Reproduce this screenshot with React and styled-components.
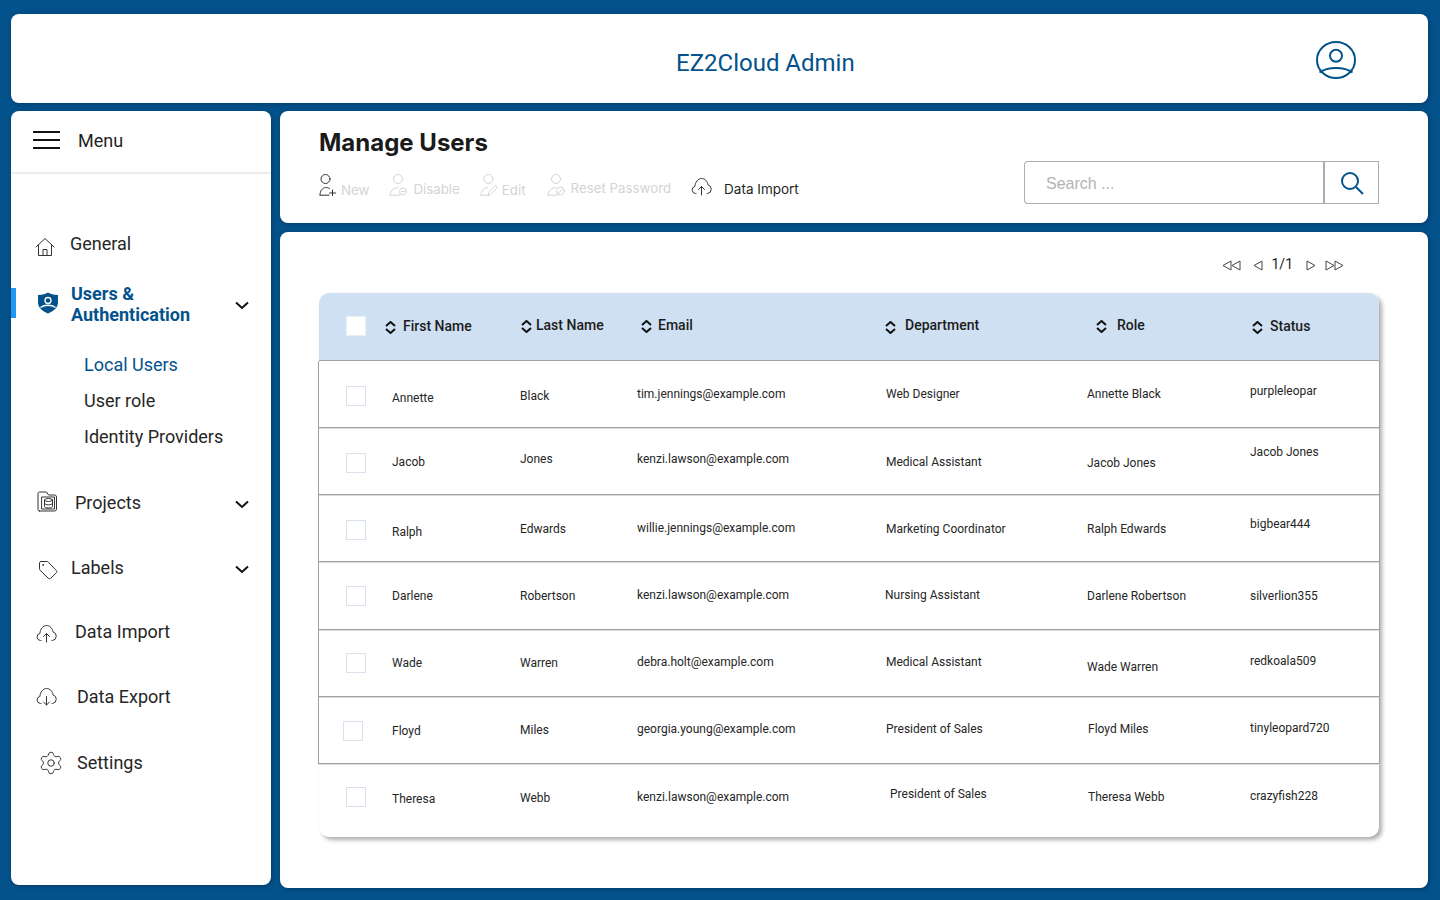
import React from 'react';
import styled, { createGlobalStyle } from 'styled-components';
import { Settings } from 'lucide-react';

const BLUE = '#04528c';
const INK = '#1f1f1f';
const MUTED = '#d4d4d4';

const GlobalStyle = createGlobalStyle`
	* { box-sizing: border-box; }
	html, body { margin: 0; height: 100%; }
	body {
		background: ${BLUE};
		font-family: Roboto, "Liberation Sans", sans-serif;
		color: ${INK};
	}
`;

const Page = styled.div`
	width: 1440px;
	height: 900px;
	overflow: hidden;
	padding: 14px 12px 0 11px;
	display: grid;
	grid-template-columns: 260px 1fr;
	grid-template-rows: 89px 774px;
	column-gap: 9px;
	row-gap: 8px;
	background: ${BLUE};
`;

const Card = styled.section`
	background: #fff;
	border-radius: 8px;
	box-shadow: 1px 1px 5px rgba(0, 30, 60, 0.45);
`;

const Header = styled(Card)`
	grid-column: 1 / 3;
	display: flex;
	align-items: center;
	padding: 0 72px 0 665px;
	justify-content: space-between;
	svg { margin-top: 3px; }
`;

const Brand = styled.h1`
	margin: 8px 0 0;
	font-size: 24px;
	font-weight: 400;
	color: ${BLUE};
`;

const Sidebar = styled(Card)``;

const MenuHead = styled.div`
	height: 63px;
	display: flex;
	align-items: center;
	padding: 0 0 3px 22px;
	gap: 18px;
	border-bottom: 2px solid #ececec;
	font-size: 18px;
`;

const Burger = styled.span`
	width: 27px;
	height: 18px;
	border-top: 2px solid #111;
	border-bottom: 2px solid #111;
	position: relative;
	&::after {
		content: '';
		position: absolute;
		left: 0;
		right: 0;
		top: 6px;
		height: 2px;
		background: #111;
	}
`;

const NavItem = styled.div`
	position: relative;
	display: flex;
	align-items: center;
	height: ${p => p.$h || 36}px;
	margin-top: ${p => p.$mt}px;
	padding: ${p => (p.$h ? 0 : 1)}px 22px 0 ${p => p.$pl || 24}px;
	gap: ${p => p.$gap}px;
	font-size: 18px;
	line-height: 21px;
	color: #262626;
	svg.icon {
		flex: none;
		margin-top: ${p => (p.$iy || 0) * 2}px;
	}
`;

const ActiveItem = styled(NavItem)`
	font-weight: 700;
	color: ${BLUE};
	&::before {
		content: '';
		position: absolute;
		left: 0;
		top: 5px;
		width: 5px;
		height: 30px;
		background: #2196f3;
	}
`;

const NavChevron = styled.svg`
	margin-left: auto;
	margin-top: ${p => (p.$dy || 0) * 2}px;
	flex: none;
`;

const SubItem = styled.div`
	height: 36px;
	line-height: 36px;
	padding-left: 73px;
	font-size: 18px;
	color: ${p => (p.$active ? BLUE : '#262626')};
`;

const SubList = styled.div`
	margin-top: 22px;
`;

const RightColumn = styled.div`
	display: flex;
	flex-direction: column;
	gap: 9px;
	height: 777px;
`;

const ToolCard = styled(Card)`
	height: 112px;
	display: flex;
	justify-content: space-between;
	align-items: flex-end;
	padding: 0 49px 19px 39px;
`;

const Title = styled.h2`
	margin: 0 0 17px;
	font-family: Inter, sans-serif;
	font-size: 24px;
	line-height: 29px;
	font-weight: 700;
	color: #1a1a1a;
`;

const Actions = styled.div`
	display: flex;
	align-items: flex-end;
	margin-bottom: 5px;
`;

const Action = styled.div`
	display: flex;
	align-items: flex-end;
	gap: ${p => p.$gap}px;
	margin-right: ${p => p.$mr}px;
	padding-bottom: ${p => p.$up || 0}px;
	font-family: Inter, sans-serif;
	font-size: ${p => (p.$on ? 13.5 : 13.3)}px;
	line-height: 17px;
	color: ${p => (p.$on ? INK : MUTED)};
	svg { margin-bottom: ${p => 3 - (p.$up || 0)}px; }
`;

const SearchBox = styled.div`
	display: flex;
	height: 43px;
	width: 355px;
`;

const SearchField = styled.div`
	width: 301px;
	border: 1px solid #adadad;
	border-right-width: 2px;
	border-radius: 4px 0 0 4px;
	padding: 2px 0 0 21px;
	display: flex;
	align-items: center;
	font-family: "Liberation Sans", Arial, sans-serif;
	font-size: 16px;
	color: #b3b3b3;
`;

const SearchButton = styled.div`
	flex: 1;
	border: 1px solid #adadad;
	border-left: 0;
	display: flex;
	align-items: center;
	justify-content: center;
`;

const MainCard = styled(Card)`
	flex: 1;
	padding: 24px 49px 0 39px;
`;

const Pager = styled.div`
	height: 18px;
	margin-bottom: 19px;
	padding-right: 35px;
	display: flex;
	justify-content: flex-end;
	align-items: center;
	font-size: 14px;
	color: #222;
`;

const PagerGap = styled.span`
	width: ${p => p.$w}px;
`;

const PageCount = styled.span`
	margin-bottom: 2px;
`;

const Table = styled.div`
	height: 544px;
	border-radius: 10px;
	background: #fff;
	box-shadow: 3px 3px 4px rgba(0, 0, 0, 0.32);
`;

const HeadRow = styled.div`
	height: 68px;
	padding-bottom: 3px;
	background: #cfe0f2;
	border-radius: 10px 10px 0 0;
	border-bottom: 1px solid #a0a0a0;
	display: grid;
	grid-template-columns: 66px 136px 120px 244px 211px 156px 1fr;
	align-items: center;
	font-size: 14px;
	font-weight: 500;
	color: #1c1c1c;
`;

const HeadCell = styled.div`
	display: flex;
	align-items: center;
	gap: ${p => p.$gap}px;
	margin-top: ${p => (p.$dy || 0) * 2}px;
	svg { margin-top: ${p => (p.$iy || 1) * 2}px; }
`;

const Row = styled.div`
	height: ${p => p.$h}px;
	margin: 0 -1px;
	padding-bottom: ${p => (p.$last ? 8 : 0)}px;
	padding-left: ${p => (p.$last ? 1 : 0)}px;
	border: ${p => (p.$last ? '0' : '1px solid #a0a0a0')};
	border-top: 0;
	box-shadow: ${p => (p.$last ? 'none' : '0 1px 0 #dcdcdc')};
	display: grid;
	grid-template-columns: 73px 128px 117px 249px 201px 163px 1fr;
	align-items: center;
	font-size: 12px;
	color: #262626;
`;

const Cell = styled.div`
	margin-top: ${p => (p.$dy || 0) * 2}px;
	margin-left: ${p => p.$dx || 0}px;
`;

const Check = styled.span`
	display: block;
	width: 20px;
	height: 20px;
	background: #fff;
	border: 1px solid ${p => (p.$head ? '#e6eef7' : '#d9e2ec')};
	margin-left: ${p => 27 + (p.$dx || 0)}px;
	margin-top: ${p => (p.$dy || 0) * 2}px;
`;

/* thin line icons */
const Line = ({ size = 20, w, h, color = '#333', sw = 1, children, ...rest }) => (
	<svg
		className="icon"
		width={w || size}
		height={h || size}
		viewBox={`0 0 ${w || size} ${h || size}`}
		fill="none"
		stroke={color}
		strokeWidth={sw}
		strokeLinecap="round"
		strokeLinejoin="round"
		{...rest}
	>
		{children}
	</svg>
);

const CloudUp = ({ color, w = 21, h = 19 }) => (
	<Line w={w} h={h} color={color}>
		<path d="M5 16.500H4.500a3.600 3.600 0 0 1-.6-7.100C4.200 5 7.300 1.500 10.500 1.500c3.200 0 6 2.600 6.500 6.400a4.400 4.400 0 0 1-.5 8.600H16" />
		<path d="M10.500 18V9.500M7.500 12.500l3-3 3 3" />
	</Line>
);

const CloudDown = () => (
	<Line w={21} h={19}>
		<path d="M5 16.500H4.500a3.600 3.600 0 0 1-.6-7.100C4.200 5 7.300 1.500 10.500 1.500c3.200 0 6 2.600 6.500 6.400a4.400 4.400 0 0 1-.5 8.600H16" />
		<path d="M10.500 9.500V18M7.500 15l3 3 3-3" />
	</Line>
);

const HomeIcon = () => (
	<Line w={20} h={20}>
		<path d="M1 10 10 1.500 19 10M3.500 8v10.500h13V8" />
		<path d="M8 18.500v-6h4v6" />
	</Line>
);

const ShieldIcon = () => (
	<svg className="icon" width="22" height="22" viewBox="0 0 22 22">
		<path fill={BLUE} d="M11 .5c2.500 1.600 5.300 2.400 10 2.600v7.400c0 5-4.200 8.700-10 11C5.200 19.200 1 15.500 1 10.500V3.100C5.700 2.900 8.500 2.100 11 .5z" />
		<circle cx="11" cy="8.500" r="3" fill="none" stroke="#fff" strokeWidth="1.300" />
		<path d="M3.500 15.500c4-3 11-3 15 0" fill="none" stroke="#fff" strokeWidth="1.300" />
	</svg>
);

const ProjectsIcon = () => (
	<Line w={21} h={21}>
		<path d="M2.500 20H17.500a2 2 0 0 0 2-2V6a2 2 0 0 0-2-2h-6l-2-3H2.500a1.500 1.500 0 0 0-1.500 1.500V18.500A1.500 1.500 0 0 0 2.500 20z" />
		<path d="M5 6h12.500v12H5z" />
		<ellipse cx="11.500" cy="9" rx="4" ry="1.500" />
		<path d="M7.500 9v6.500c0 .8 1.800 1.500 4 1.500s4-.7 4-1.500V9M7.500 12.300c0 .8 1.800 1.500 4 1.500s4-.7 4-1.500" />
	</Line>
);

const TagIcon = () => (
	<Line w={20} h={20}>
		<path d="M3 1.500h6c.5 0 1 .2 1.300.6l8.100 8.500c.6.600.6 1.500 0 2.100l-5.800 5.700c-.6.600-1.500.6-2.100 0L2 10.200c-.3-.3-.5-.8-.5-1.300V3c0-.8.700-1.500 1.500-1.500z" />
		<circle cx="5" cy="5" r=".4" />
	</Line>
);

const Chevron = ({ dy }) => (
	<NavChevron $dy={dy} width="14" height="9" viewBox="0 0 14 9" fill="none" stroke="#111" strokeWidth="2">
		<path d="M1 1.500 7 7l6-5.500" />
	</NavChevron>
);

const ProfileIcon = () => (
	<svg width="40" height="38" viewBox="0 0 40 38" fill="none" stroke={BLUE} strokeWidth="2">
		<ellipse cx="20" cy="19" rx="19" ry="18" />
		<circle cx="20" cy="14.700" r="6" />
		<path d="M3.500 31.500c8-6 25-6 33 0" />
	</svg>
);

const SearchIcon = () => (
	<svg width="24" height="24" viewBox="0 0 24 24" fill="none" stroke={BLUE} strokeWidth="2">
		<circle cx="10" cy="10" r="8" />
		<path d="m16 16 7 7" />
	</svg>
);

const NewUserIcon = () => (
	<Line w={18} h={22}>
		<circle cx="6.500" cy="5" r="4.500" />
		<path d="M1 21c0-4.500 2.500-7 5.500-7.500 1.500-.1 3 .3 4 1" />
		<path d="M1 21.200h9M13.500 16v6M10.500 19h6" />
	</Line>
);

const DisableUserIcon = () => (
	<Line w={18} h={22} color={MUTED}>
		<circle cx="9" cy="5" r="4.500" />
		<path d="M1 21c.5-4 3-7 8-7.500M1 21.200h10" />
		<circle cx="14" cy="17.500" r="3.500" />
		<path d="M12.500 17.500h3" />
	</Line>
);

const EditUserIcon = () => (
	<Line w={18} h={22} color={MUTED}>
		<circle cx="8.500" cy="5" r="4.500" />
		<path d="M1 21c.3-4.500 3-7 6.500-7.500M1 21.200h8" />
		<path d="M8 21.200l1-3.500 6.500-6.500 2 2-6.500 6.500z" />
	</Line>
);

const ResetUserIcon = () => (
	<Line w={18} h={22} color={MUTED}>
		<circle cx="9" cy="5" r="4.500" />
		<path d="M1 21c.5-4 3-7 8-7.500M1 21.200h9" />
		<circle cx="13.500" cy="17" r="4" />
		<path d="M10.500 20l5.500-5.500" />
	</Line>
);

const SortIcon = () => (
	<svg width="11" height="13" viewBox="0 0 11 13" fill="none" stroke="#111" strokeWidth="2" strokeLinejoin="round">
		<path d="M1 5 5.500 1 10 5M1 8l4.500 4L10 8" />
	</svg>
);

const PagerTri = ({ dir, double }) => {
	const tri = x => (dir === 'l' ? `M${x + 8} 1 ${x} 5.500l${8} 4.500z` : `M${x} 1l8 4.500-8 4.500z`);
	return (
		<svg width={double ? 19 : 10} height="11" viewBox={`0 0 ${double ? 19 : 10} 11`} fill="none" stroke="#444" strokeWidth="1">
			<path d={tri(1)} />
			{double && <path d={tri(10)} />}
		</svg>
	);
};

const heads = [
	{ label: 'First Name', gap: 7, dy: 1, iy: 1 },
	{ label: 'Last Name', gap: 4, dy: 0, iy: 1 },
	{ label: 'Email', gap: 6, dy: 0, iy: 1 },
	{ label: 'Department', gap: 9, dy: 0, iy: 2 },
	{ label: 'Role', gap: 10, dy: 0, iy: 1 },
	{ label: 'Status', gap: 7, dy: 1, iy: 1 }
];

const rows = [
	{ h: 67, check: 2, cells: ['Annette', 'Black', 'tim.jennings@example.com', 'Web Designer', 'Annette Black', 'purpleleopar'], dy: [4, 2, 0, 0, 0, -3] },
	{ h: 67, check: 2, cells: ['Jacob', 'Jones', 'kenzi.lawson@example.com', 'Medical Assistant', 'Jacob Jones', 'Jacob Jones'], dy: [1, -2, -2, 1, 2, -9] },
	{ h: 67, check: 2, cells: ['Ralph', 'Edwards', 'willie.jennings@example.com', 'Marketing Coordinator', 'Ralph Edwards', 'bigbear444'], dy: [4, 1, 0, 1, 1, -4] },
	{ h: 68, check: 0, cells: ['Darlene', 'Robertson', 'kenzi.lawson@example.com', 'Nursing Assistant', 'Darlene Robertson', 'silverlion355'], dy: [0, 0, -1, -1, 0, 0], dx: { 3: -1 } },
	{ h: 67, check: 0, cells: ['Wade', 'Warren', 'debra.holt@example.com', 'Medical Assistant', 'Wade Warren', 'redkoala509'], dy: [0, 0, -1, -1, 4, -2] },
	{ h: 67, check: 1, checkDx: -3, cells: ['Floyd', 'Miles', 'georgia.young@example.com', 'President of Sales', 'Floyd Miles', 'tinyleopard720'], dy: [1, 0, -1, -1, -1, -2], dx: { 4: 1 } },
	{ h: 73, last: true, check: 0, cells: ['Theresa', 'Webb', 'kenzi.lawson@example.com', 'President of Sales', 'Theresa Webb', 'crazyfish228'], dy: [2, 1, 0, -3, 0, -1], dx: { 3: 4, 4: 1 } }
];

const App = () => (
	<Page>
		<GlobalStyle />
		<Header>
			<Brand>EZ2Cloud Admin</Brand>
			<ProfileIcon />
		</Header>

		<Sidebar>
			<MenuHead>
				<Burger />
				<span>Menu</span>
			</MenuHead>
			<NavItem $mt={51} $gap={15} $iy={3}>
				<HomeIcon />
				General
			</NavItem>
			<ActiveItem $mt={22} $h={42} $gap={12} $pl={26} $iy={-1}>
				<ShieldIcon />
				<span>Users &amp;<br />Authentication</span>
				<Chevron dy={1} />
			</ActiveItem>
			<SubList>
				<SubItem $active>Local Users</SubItem>
				<SubItem>User role</SubItem>
				<SubItem>Identity Providers</SubItem>
			</SubList>
			<NavItem $mt={29} $gap={17} $pl={26} $iy={-1}>
				<ProjectsIcon />
				Projects
				<Chevron dy={2} />
			</NavItem>
			<NavItem $mt={29} $gap={13} $pl={27} $iy={2.5}>
				<TagIcon />
				Labels
				<Chevron dy={2} />
			</NavItem>
			<NavItem $mt={28} $gap={18} $pl={25} $iy={2}>
				<CloudUp />
				Data Import
			</NavItem>
			<NavItem $mt={29} $gap={20} $pl={25}>
				<CloudDown />
				Data Export
			</NavItem>
			<NavItem $mt={30} $gap={13} $pl={27}>
				<Settings className="icon" size={26} strokeWidth={0.9} color="#333" />
				Settings
			</NavItem>
		</Sidebar>

		<RightColumn>
			<ToolCard>
				<div>
					<Title>Manage Users</Title>
					<Actions>
						<Action $gap={4} $mr={20}>
							<NewUserIcon />
							New
						</Action>
						<Action $gap={6} $mr={20} $up={1}>
							<DisableUserIcon />
							Disable
						</Action>
						<Action $gap={4} $mr={21}>
							<EditUserIcon />
							Edit
						</Action>
						<Action $gap={6} $mr={20} $up={2}>
							<ResetUserIcon />
							Reset Password
						</Action>
						<Action $on $gap={12} $mr={0} $up={1}>
							<CloudUp />
							Data Import
						</Action>
					</Actions>
				</div>
				<SearchBox>
					<SearchField>Search ...</SearchField>
					<SearchButton>
						<SearchIcon />
					</SearchButton>
				</SearchBox>
			</ToolCard>

			<MainCard>
				<Pager>
					<PagerTri dir="l" double />
					<PagerGap $w={12} />
					<PagerTri dir="l" />
					<PagerGap $w={8} />
					<PageCount>1/1</PageCount>
					<PagerGap $w={13} />
					<PagerTri dir="r" />
					<PagerGap $w={9} />
					<PagerTri dir="r" double />
				</Pager>
				<Table>
					<HeadRow>
						<Check $head $dy={1} />
						{heads.map(h => (
							<HeadCell key={h.label} $gap={h.gap} $dy={h.dy} $iy={h.iy}>
								<SortIcon />
								{h.label}
							</HeadCell>
						))}
					</HeadRow>
					{rows.map(r => (
						<Row key={r.cells[0]} $h={r.h} $last={r.last}>
							<Check $dy={r.check} $dx={r.checkDx} />
							{r.cells.map((c, i) => (
								<Cell key={i} $dy={r.dy[i]} $dx={r.dx && r.dx[i]}>
									{c}
								</Cell>
							))}
						</Row>
					))}
				</Table>
			</MainCard>
		</RightColumn>
	</Page>
);

export default App;
